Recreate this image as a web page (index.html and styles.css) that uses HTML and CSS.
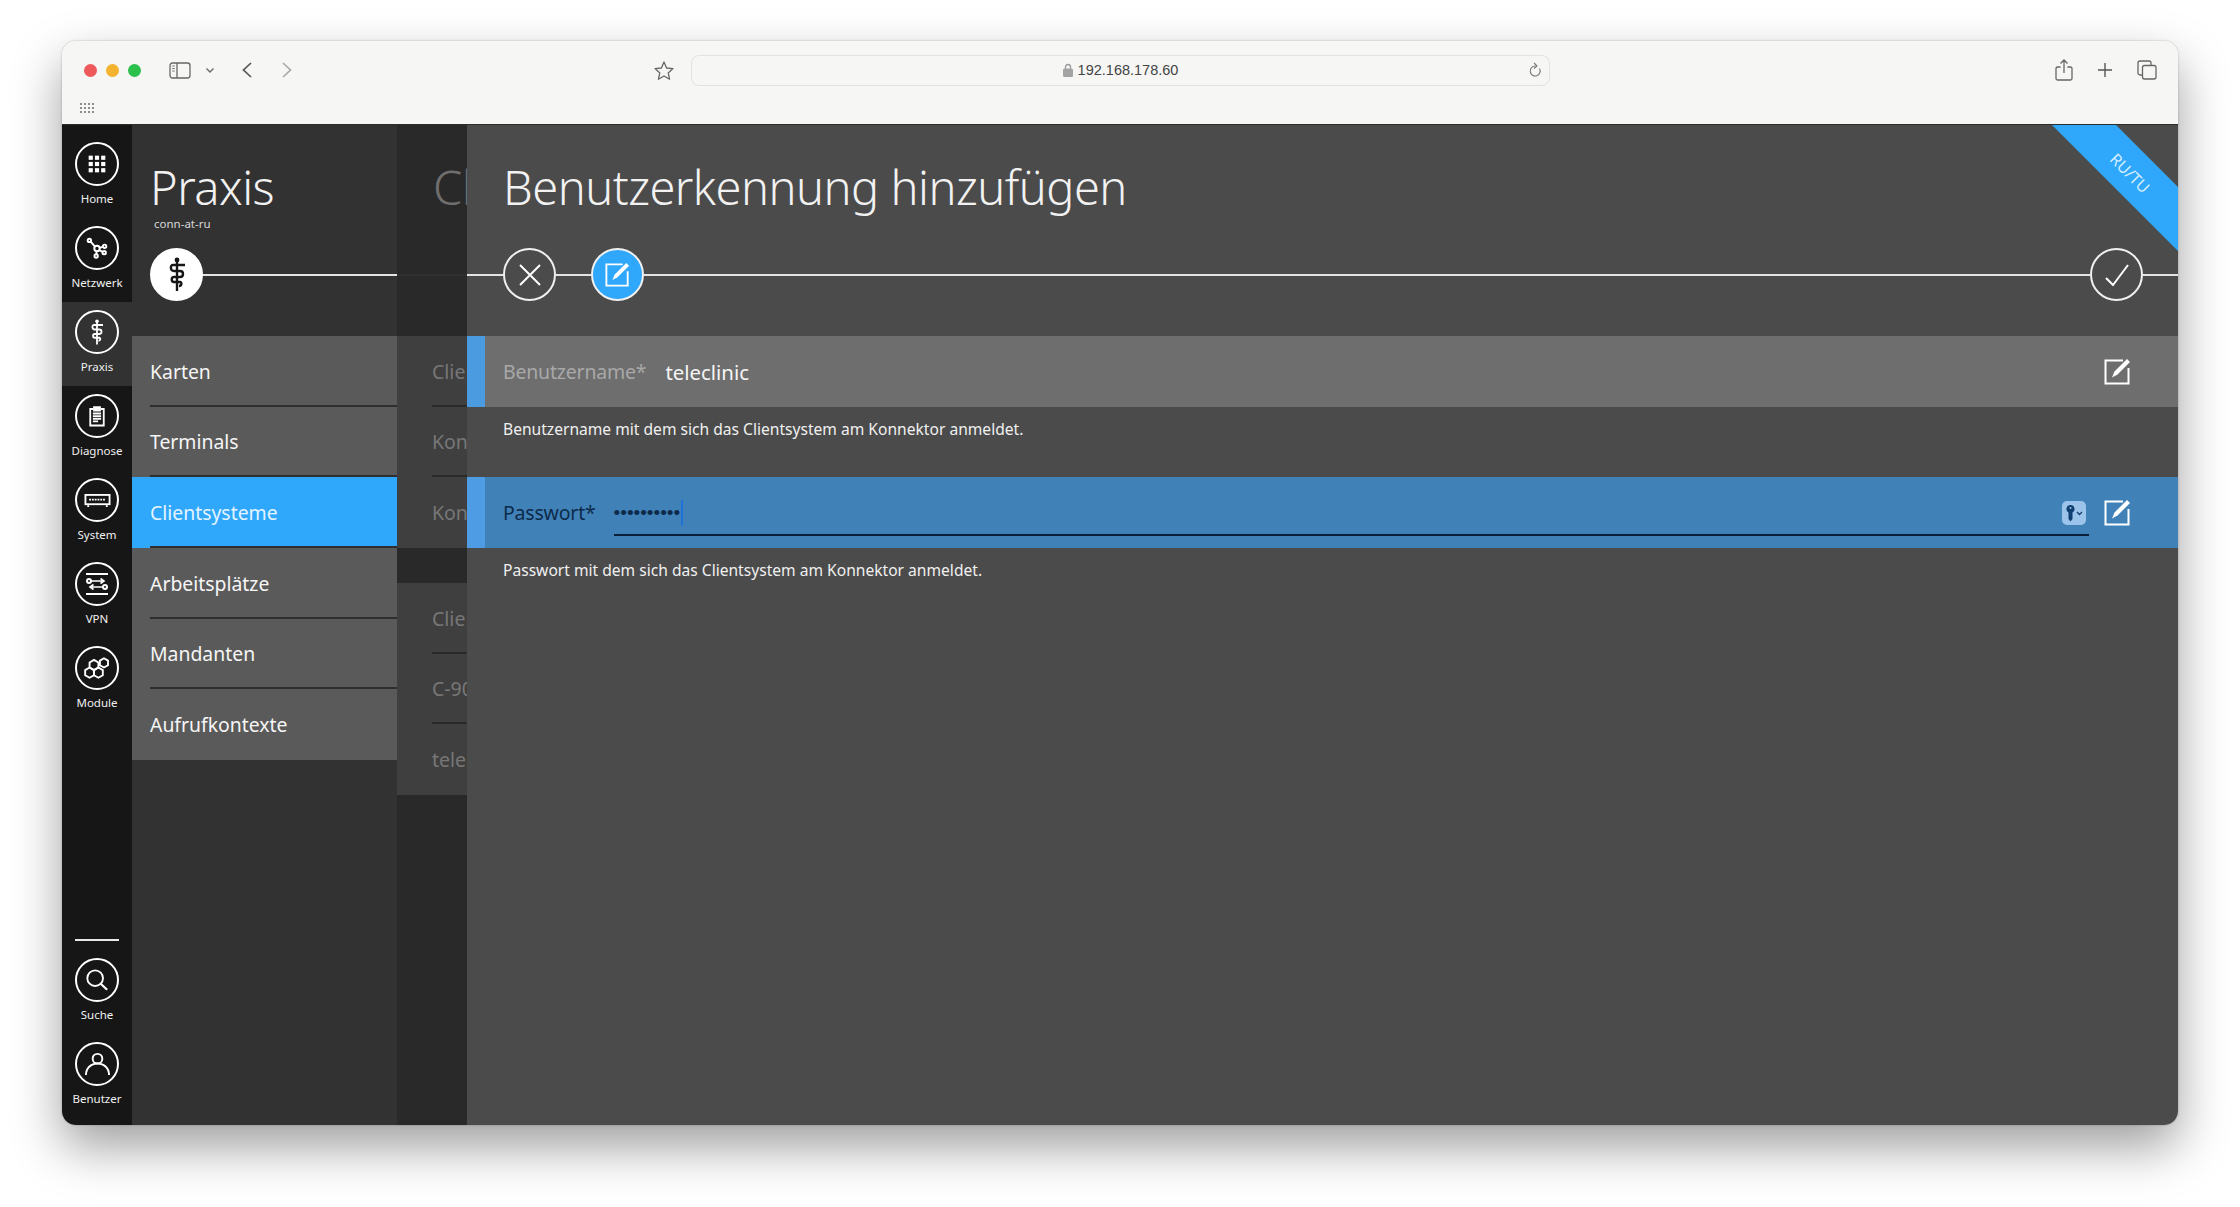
FILE: index.html
```html
<!DOCTYPE html>
<html lang="de">
<head>
    <meta charset="UTF-8">
    <title>Benutzerkennung hinzufügen</title>
    <link rel="stylesheet" href="styles.css">
</head>
<body>
    <svg class="icon-defs" width="0" height="0">
        <symbol id="i-rod" viewBox="0 0 24 36">
            <circle cx="12" cy="3" r="2.4" fill="currentColor"/>
            <path d="M12 3v31" fill="none" stroke="currentColor" stroke-width="2.4"/>
            <path d="M20 8H8c-3 0-3 6 1 6h6c4 0 4 6 0 6H9c-3 0-3 5 0 5h6c2 0 2 4-1 4" fill="none" stroke="currentColor" stroke-width="2.4"/>
        </symbol>
        <symbol id="i-edit" viewBox="0 0 27 27">
            <path d="M19 2.500H1.500v23h23V10" fill="none" stroke="currentColor" stroke-width="2"/>
            <path d="M8 19.500l2.500-6L23 1l3 3-12.500 12.500z" fill="currentColor"/>
        </symbol>
    </svg>

    <div class="window">
        <header class="toolbar">
            <div class="toolbar-row">
                <div class="toolbar-left">
                    <span class="light light-red"></span>
                    <span class="light light-yellow"></span>
                    <span class="light light-green"></span>
                    <svg class="tb-sidebar" width="22" height="17" viewBox="0 0 22 17">
                        <rect x="1" y="1" width="20" height="15" rx="2.500" fill="none" stroke="#666" stroke-width="1.300"/>
                        <path d="M8 1v15" stroke="#666" stroke-width="1.300"/>
                        <path d="M3.200 4h2.600M3.200 6.500h2.600M3.200 9h2.600" stroke="#777" stroke-width="1"/>
                    </svg>
                    <svg class="tb-chevron" width="10" height="7" viewBox="0 0 10 7"><path d="M1.500 1.500L5 5l3.500-3.500" fill="none" stroke="#666" stroke-width="1.300"/></svg>
                    <svg class="tb-back" width="12" height="18" viewBox="0 0 12 18"><path d="M10 2L2.500 9l7.500 7" fill="none" stroke="#555" stroke-width="1.700"/></svg>
                    <svg class="tb-forward" width="12" height="18" viewBox="0 0 12 18"><path d="M2 2l7.500 7L2 16" fill="none" stroke="#aaa" stroke-width="1.700"/></svg>
                </div>
                <svg class="tb-star" width="22" height="21" viewBox="0 0 22 21"><path d="M11 2l2.600 6 6.400.6-4.800 4.300 1.400 6.300L11 16l-5.600 3.200 1.400-6.300L2 8.600 8.400 8z" fill="none" stroke="#666" stroke-width="1.300" stroke-linejoin="round"/></svg>
                <div class="urlbar">
                    <svg class="url-lock" width="10" height="14" viewBox="0 0 10 14"><path d="M2.500 6V4a2.500 2.500 0 0 1 5 0v2" fill="none" stroke="#999" stroke-width="1.300"/><rect y="5.500" width="10" height="8.500" rx="1.500" fill="#a3a3a3"/></svg>
                    <span class="url-text">192.168.178.60</span>
                    <svg class="url-reload" width="14" height="17" viewBox="0 0 14 17"><path d="M10.500 6.500a5 5 0 1 1-4-2.500" fill="none" stroke="#777" stroke-width="1.100"/><path d="M5 1l3 3-3 2.500" fill="none" stroke="#777" stroke-width="1.100"/></svg>
                </div>
                <div class="toolbar-right">
                    <svg width="18" height="22" viewBox="0 0 18 22"><path d="M5.500 8H2.500A1.500 1.500 0 0 0 1 9.500v10A1.500 1.500 0 0 0 2.500 21h13a1.500 1.500 0 0 0 1.500-1.500v-10A1.500 1.500 0 0 0 15.500 8h-3M9 14V1.500M5.500 4.500L9 1l3.500 3.500" fill="none" stroke="#666" stroke-width="1.300"/></svg>
                    <svg width="16" height="16" viewBox="0 0 16 16"><path d="M8 1v14M1 8h14" stroke="#555" stroke-width="1.400"/></svg>
                    <svg width="20" height="20" viewBox="0 0 20 20"><path d="M5 15H3a2 2 0 0 1-2-2V3a2 2 0 0 1 2-2h9a2 2 0 0 1 2 2v2" fill="none" stroke="#666" stroke-width="1.300"/><rect x="5.500" y="5.500" width="13.500" height="13.500" rx="2" fill="none" stroke="#666" stroke-width="1.300"/></svg>
                </div>
            </div>
            <svg class="tb-grid" width="14" height="11" viewBox="0 0 14 11" fill="#8c8c8c">
                <rect x="0" y="0" width="2" height="2"/><rect x="4" y="0" width="2" height="2"/><rect x="8" y="0" width="2" height="2"/><rect x="12" y="0" width="2" height="2"/>
                <rect x="0" y="4" width="2" height="2"/><rect x="4" y="4" width="2" height="2"/><rect x="8" y="4" width="2" height="2"/><rect x="12" y="4" width="2" height="2"/>
                <rect x="0" y="8" width="2" height="2"/><rect x="4" y="8" width="2" height="2"/><rect x="8" y="8" width="2" height="2"/><rect x="12" y="8" width="2" height="2"/>
            </svg>
        </header>

        <div class="app">
            <nav class="sidebar">
                <div class="nav-group">
                    <a class="nav-item">
                        <span class="nav-circle">
                            <svg width="20" height="20" viewBox="0 0 24 24" fill="#fff">
                                <rect x="2" y="2" width="5" height="5"/><rect x="9.500" y="2" width="5" height="5"/><rect x="17" y="2" width="5" height="5"/>
                                <rect x="2" y="9.500" width="5" height="5"/><rect x="9.500" y="9.500" width="5" height="5"/><rect x="17" y="9.500" width="5" height="5"/>
                                <rect x="2" y="17" width="5" height="5"/><rect x="9.500" y="17" width="5" height="5"/><rect x="17" y="17" width="5" height="5"/>
                            </svg>
                        </span>
                        Home
                    </a>
                    <a class="nav-item">
                        <span class="nav-circle">
                            <svg width="22" height="22" viewBox="0 0 26 26" fill="none" stroke="#fff" stroke-width="2.300">
                                <circle cx="4" cy="4" r="2"/><circle cx="13" cy="13.500" r="3.200"/><circle cx="22" cy="11" r="2"/><circle cx="21.500" cy="18.500" r="2"/><circle cx="12" cy="22.500" r="2"/>
                                <path d="M5.500 5.500l5.200 5.800M16 12.700l4-1.100M15.500 15.500l4.300 2M12.700 16.700l-.5 3.800"/>
                            </svg>
                        </span>
                        Netzwerk
                    </a>
                    <a class="nav-item nav-item-active">
                        <span class="nav-circle">
                            <svg class="rod" width="18" height="27"><use href="#i-rod"/></svg>
                        </span>
                        Praxis
                    </a>
                    <a class="nav-item">
                        <span class="nav-circle">
                            <svg width="18" height="23" viewBox="0 0 24 28" fill="none" stroke="#fff" stroke-width="2.400">
                                <path d="M7 4H3v22h18V4h-4"/>
                                <path d="M8 1.500h8V6H8z" fill="#fff"/>
                                <path d="M6.500 10h11M6.500 13.500h11M6.500 17h11M6.500 20.500h7"/>
                            </svg>
                        </span>
                        Diagnose
                    </a>
                    <a class="nav-item">
                        <span class="nav-circle">
                            <svg width="27" height="13" viewBox="0 0 28 14" fill="none" stroke="#fff" stroke-width="2">
                                <rect x="1" y="1" width="26" height="10"/>
                                <path d="M5 6h18" stroke-dasharray="2 1"/>
                                <path d="M4 12v2M24 12v2"/>
                            </svg>
                        </span>
                        System
                    </a>
                    <a class="nav-item">
                        <span class="nav-circle">
                            <svg width="24" height="22" viewBox="0 0 24 22" fill="none" stroke="#fff" stroke-width="2">
                                <path d="M1 1h22M1 21h22"/>
                                <circle cx="4" cy="8" r="2"/><circle cx="20" cy="14" r="2"/>
                                <path d="M6 8h13M15.500 5.500l3.500 2.500-3.500 2.500M18 14H5M8.500 11.500L5 14l3.500 2.500" stroke-width="1.600"/>
                            </svg>
                        </span>
                        VPN
                    </a>
                    <a class="nav-item">
                        <span class="nav-circle">
                            <svg width="28" height="26" viewBox="0 0 30 28" fill="none" stroke="#fff" stroke-width="2">
                                <polygon points="7,13.500 11.760,16.250 11.760,21.750 7,24.500 2.240,21.750 2.240,16.250"/>
                                <polygon points="16.500,13.500 21.260,16.250 21.260,21.750 16.500,24.500 11.740,21.750 11.740,16.250"/>
                                <polygon points="11.750,5.250 16.510,8 16.510,13.500 11.750,16.250 7,13.500 7,8"/>
                                <polygon points="22.500,3.500 26.830,6 26.830,11 22.500,13.500 18.170,11 18.170,6"/>
                            </svg>
                        </span>
                        Module
                    </a>
                </div>
                <div class="nav-group">
                    <div class="nav-divider"></div>
                    <a class="nav-item">
                        <span class="nav-circle">
                            <svg width="24" height="24" viewBox="0 0 26 26" fill="none" stroke="#fff" stroke-width="2">
                                <circle cx="11" cy="11" r="8.500"/>
                                <path d="M17 17l7 6.500" stroke-width="2.400"/>
                            </svg>
                        </span>
                        Suche
                    </a>
                    <a class="nav-item">
                        <span class="nav-circle">
                            <svg width="27" height="27" viewBox="0 0 28 28" fill="none" stroke="#fff" stroke-width="2">
                                <circle cx="14" cy="8" r="5"/>
                                <path d="M2 25c0-7 5-12 12-12s12 5 12 12"/>
                            </svg>
                        </span>
                        Benutzer
                    </a>
                </div>
            </nav>

            <section class="panel panel-list">
                <div class="panel-head">
                    <h1 class="title">Praxis</h1>
                    <div class="subtitle">conn-at-ru</div>
                    <div class="rail">
                        <span class="step step-white">
                            <svg class="rod" width="24" height="36"><use href="#i-rod"/></svg>
                        </span>
                        <span class="rail-line"></span>
                    </div>
                </div>
                <ul class="menu">
                    <li class="menu-item">Karten</li>
                    <li class="menu-item">Terminals</li>
                    <li class="menu-item menu-item-active">Clientsysteme</li>
                    <li class="menu-item">Arbeitsplätze</li>
                    <li class="menu-item">Mandanten</li>
                    <li class="menu-item">Aufrufkontexte</li>
                </ul>
            </section>

            <section class="panel panel-peek">
                <div class="panel-head">
                    <h1 class="title">Cl</h1>
                    <div class="subtitle"></div>
                    <div class="rail"><span class="rail-line"></span></div>
                </div>
                <div class="peek-rows">
                    <div class="peek-row">Clie</div>
                    <div class="peek-row">Kon</div>
                    <div class="peek-row">Kon</div>
                </div>
                <div class="peek-rows peek-rows-second">
                    <div class="peek-row">Clie</div>
                    <div class="peek-row">C-90</div>
                    <div class="peek-row">tele</div>
                </div>
            </section>

            <main class="panel panel-main">
                <div class="ribbon"></div>
                <div class="ribbon-text">RU/TU</div>
                <div class="panel-head">
                    <h1 class="title">Benutzerkennung hinzufügen</h1>
                    <div class="subtitle"></div>
                    <div class="rail">
                        <span class="rail-line rail-start"></span>
                        <span class="step">
                            <svg width="26" height="26" viewBox="0 0 26 26"><path d="M3 3l20 20M23 3L3 23" stroke="#fff" stroke-width="2"/></svg>
                        </span>
                        <span class="rail-line rail-mid"></span>
                        <span class="step step-blue">
                            <svg class="edit" width="25" height="25"><use href="#i-edit"/></svg>
                        </span>
                        <span class="rail-line"></span>
                        <span class="step">
                            <svg width="26" height="24" viewBox="0 0 26 24"><path d="M2 15l7 7L24 2" fill="none" stroke="#fff" stroke-width="2"/></svg>
                        </span>
                        <span class="rail-line rail-end"></span>
                    </div>
                </div>

                <div class="field">
                    <span class="field-label field-label-user">Benutzername*</span>
                    <span class="field-value">teleclinic</span>
                    <svg class="edit field-edit" width="27" height="27"><use href="#i-edit"/></svg>
                </div>
                <p class="field-help">Benutzername mit dem sich das Clientsystem am Konnektor anmeldet.</p>

                <div class="field field-focus">
                    <span class="field-label">Passwort*</span>
                    <div class="field-input">
                        <span class="dots">••••••••••</span>
                        <span class="caret"></span>
                        <span class="key-btn">
                            <svg width="20" height="20" viewBox="0 0 20 20">
                                <path d="M6.500 2a4 4 0 0 1 2 7.500V16l-2 2.500-2-2.500V9.500a4 4 0 0 1 2-7.500z" fill="#0f3f70"/>
                                <circle cx="6.500" cy="5" r="1" fill="#9cc4ea"/>
                                <path d="M13 9l2.500 2.500L18 9" fill="none" stroke="#0f3f70" stroke-width="1.300"/>
                            </svg>
                        </span>
                    </div>
                    <svg class="edit field-edit" width="27" height="27"><use href="#i-edit"/></svg>
                </div>
                <p class="field-help">Passwort mit dem sich das Clientsystem am Konnektor anmeldet.</p>
            </main>
        </div>
    </div>
</body>
</html>
```

FILE: styles.css
```css
/* General Reset */
* {
    margin: 0;
    padding: 0;
    box-sizing: border-box;
}

body {
    background-color: #ffffff;
    font-family: 'Noto Sans', sans-serif;
    color: #ffffff;
    height: 1207px;
    padding: 41px 62px 82px;
    overflow: hidden;
}

.icon-defs {
    position: absolute;
}

.window {
    display: flex;
    flex-direction: column;
    height: 1084px;
    border-radius: 14px;
    overflow: hidden;
    box-shadow: 0 22px 50px rgba(0, 0, 0, 0.38), 0 0 2px rgba(0, 0, 0, 0.3);
}

/* Browser toolbar */
.toolbar {
    height: 83px;
    background-color: #f6f6f4;
    flex-shrink: 0;
}

.toolbar-row {
    display: flex;
    align-items: center;
    height: 58px;
}

.toolbar-left {
    display: flex;
    align-items: center;
    width: 591px;
    padding-left: 22px;
}

.light {
    width: 13px;
    height: 13px;
    border-radius: 50%;
    margin-right: 9px;
}

.light-red { background-color: #ee5a5c; }
.light-yellow { background-color: #f3b32e; }
.light-green { background-color: #2cc04d; }

.tb-sidebar { margin-left: 19px; }
.tb-chevron { margin-left: 14px; }
.tb-back { margin-left: 26px; }
.tb-forward { margin-left: 28px; }

.tb-star {
    margin-right: 16px;
}

.urlbar {
    display: flex;
    align-items: center;
    justify-content: center;
    position: relative;
    width: 859px;
    height: 31px;
    border: 1px solid #e2e2e0;
    border-radius: 8px;
    color: #444444;
    font-family: 'Liberation Sans', sans-serif;
    font-size: 14.5px;
}

.url-lock {
    margin-right: 5px;
}

.url-reload {
    position: absolute;
    right: 6px;
    top: 6px;
}

.toolbar-right {
    display: flex;
    align-items: center;
    gap: 24px;
    margin-left: auto;
    padding-right: 21px;
}

.tb-grid {
    display: block;
    margin: 4px 0 0 18px;
}

/* App layout */
.app {
    display: flex;
    flex: 1;
    min-height: 0;
    border-top: 1px solid #2c2c2c;
}

.sidebar {
    display: flex;
    flex-direction: column;
    justify-content: space-between;
    width: 70px;
    flex-shrink: 0;
    background-color: #161616;
    padding: 9px 0 7px;
}

.nav-item {
    display: flex;
    flex-direction: column;
    align-items: center;
    height: 84px;
    padding-top: 8px;
    font-size: 11.5px;
    line-height: 16px;
    color: #f0f0f0;
}

.nav-item-active {
    background-color: #323232;
}

.nav-circle {
    display: flex;
    align-items: center;
    justify-content: center;
    width: 44px;
    height: 44px;
    margin-bottom: 5px;
    border: 2px solid #ffffff;
    border-radius: 50%;
}

.rod {
    color: #ffffff;
}

.nav-divider {
    width: 44px;
    height: 2px;
    margin: 0 auto 9px;
    background-color: #e8e8e8;
}

.panel {
    flex-shrink: 0;
}

.panel-head {
    height: 211px;
    padding-top: 25px;
}

.title {
    font-size: 47px;
    font-weight: 300;
    line-height: 74px;
    letter-spacing: -0.5px;
    white-space: nowrap;
    color: #f2f2f2;
}

.subtitle {
    height: 32px;
    margin-top: -8px;
    padding-left: 2px;
    font-size: 11.5px;
    line-height: 16px;
    color: #d8d8d8;
}

.rail {
    display: flex;
    align-items: center;
    height: 53px;
}

.rail-line {
    flex: 1;
    height: 2px;
    background-color: #e4e4e4;
}

.rail-start { flex: 0 0 36px; }
.rail-mid { flex: 0 0 35px; }
.rail-end { flex: 0 0 35px; }

.step {
    display: flex;
    align-items: center;
    justify-content: center;
    flex-shrink: 0;
    width: 53px;
    height: 53px;
    border: 2px solid #f0f0f0;
    border-radius: 50%;
}

.step-white {
    background-color: #ffffff;
    border-color: #ffffff;
}

.step-white .rod {
    color: #161616;
}

.step-blue {
    background-color: #2fa7fb;
}

.edit {
    color: #ffffff;
}

/* Panel with the menu */
.panel-list {
    width: 265px;
    background-color: #323232;
}

.panel-list .panel-head {
    padding-left: 20px;
}

.panel-list .title {
    margin-left: -2px;
}

.panel-list .rail {
    margin-left: -2px;
}

.menu {
    list-style: none;
}

.menu-item {
    display: flex;
    align-items: center;
    position: relative;
    height: 70.67px;
    padding-left: 18px;
    background-color: #5a5a5a;
    font-size: 19.4px;
    color: #f5f5f5;
}

/* divider starts a bit inside the row */
.menu-item::after {
    content: '';
    position: absolute;
    left: 18px;
    right: 0;
    bottom: 0;
    height: 2px;
    background-color: #2e2e2e;
}

.menu-item:last-child::after {
    display: none;
}

.menu-item-active {
    background-color: #2fa7fb;
    color: #e4f4ff;
}

/* Half hidden panel behind the form */
.panel-peek {
    width: 70px;
    overflow: hidden;
    background-color: #292929;
}

.panel-peek .panel-head {
    padding-left: 36px;
}

.panel-peek .title {
    color: #6f6f6f;
}

.panel-peek .rail {
    margin-left: -36px;
}

.panel-peek .rail-line {
    background-color: #303030;
}

.peek-rows {
    background-color: #3f3f3f;
}

.peek-rows-second {
    margin-top: 35px;
}

.peek-row {
    display: flex;
    align-items: center;
    position: relative;
    height: 70.67px;
    padding-left: 35px;
    font-size: 19.5px;
    white-space: nowrap;
    color: #777777;
}

.peek-row:not(:last-child)::after {
    content: '';
    position: absolute;
    left: 35px;
    right: 0;
    bottom: 0;
    height: 2px;
    background-color: #2a2a2a;
}

/* Form panel */
.panel-main {
    flex: 1;
    position: relative;
    overflow: hidden;
    background-color: #4b4b4b;
}

.panel-main .title {
    padding-left: 36px;
}

.ribbon {
    position: absolute;
    top: 0;
    right: 0;
    width: 126px;
    height: 126px;
    background-color: #2fa7fb;
    clip-path: polygon(0 0, 64px 0, 126px 62px, 126px 126px);
}

.ribbon-text {
    position: absolute;
    top: 36px;
    right: 18px;
    width: 60px;
    text-align: center;
    font-size: 16px;
    line-height: 24px;
    color: #d4efff;
    transform: rotate(45deg);
}

.field {
    display: flex;
    align-items: center;
    height: 71px;
    padding-left: 18px;
    border-left: 18px solid #4a9be0;
    background-color: #6e6e6e;
    font-size: 19.5px;
}

.field-label {
    margin-right: 18px;
    white-space: nowrap;
    letter-spacing: -0.2px;
    color: #a8a8a8;
}

.field-label-user {
    margin-right: 19px;
}

.field-value {
    flex: 1;
    font-size: 20.4px;
    color: #f5f5f5;
}

.field-edit {
    flex-shrink: 0;
    margin-right: 47px;
}

.field-focus {
    background-color: #4082b8;
    border-left-color: #4e9ce4;
}

.field-focus .field-label {
    color: #0d2a4a;
}

.field-input {
    display: flex;
    align-items: center;
    flex: 1;
    align-self: stretch;
    height: 59px;
    margin-right: 15px;
    margin-bottom: 12px;
    padding-top: 14px;
    border-bottom: 2px solid #0b1f3a;
}

.dots {
    font-family: 'Liberation Sans', sans-serif;
    font-size: 19px;
    color: #0d2a4a;
}

.caret {
    width: 2px;
    height: 26px;
    margin-left: 1px;
    background-color: #1f72d8;
}

.key-btn {
    display: flex;
    align-items: center;
    justify-content: center;
    width: 24px;
    height: 24px;
    margin-left: auto;
    margin-right: 3px;
    border-radius: 5px;
    background-color: #9cc4ea;
}

.field-help {
    height: 70px;
    padding: 12px 0 0 36px;
    font-size: 15.6px;
    line-height: 20px;
    color: #f0f0f0;
}
```
